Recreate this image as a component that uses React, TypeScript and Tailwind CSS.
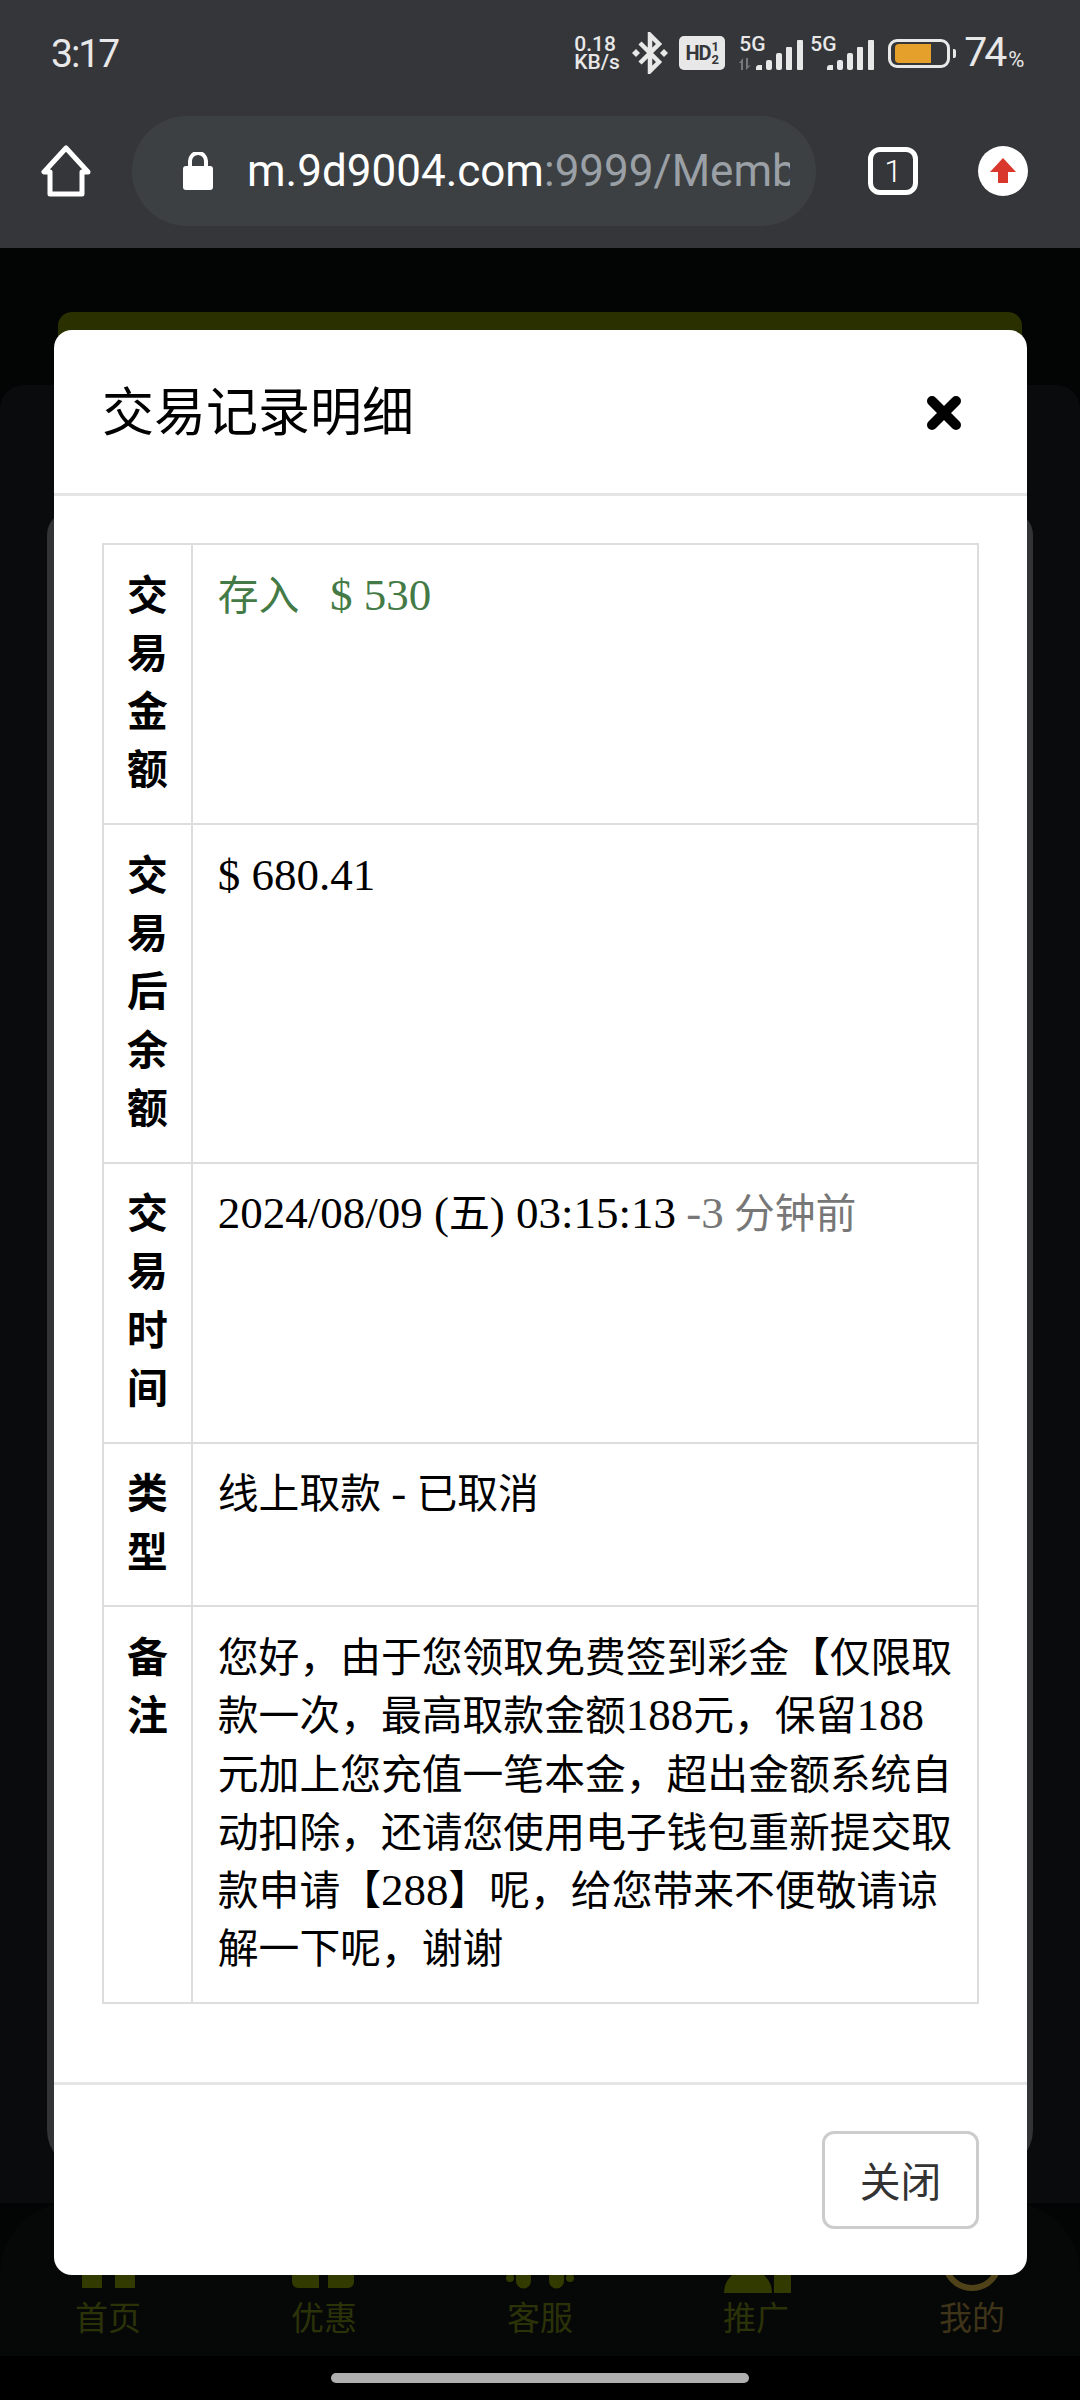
import React from "react";

const Lat = ({ children }: { children: React.ReactNode }) => (
  <span className="text-[45px] leading-none">{children}</span>
);

const Signal = ({ arrows }: { arrows?: boolean }) => (
  <div className="flex items-start h-[34px]">
    <span className="w-[27px] font-['Roboto',sans-serif] text-[21px] font-medium leading-[16px] text-[#e8e8e8]">5G</span>
    <svg width="66" height="32" viewBox="0 0 66 32" className="-ml-[29px] mt-[2px]">
      {arrows && (
        <g fill="#77787a">
          <path d="M2 25l4-5v12H4v-7z" />
          <path d="M9 20h2v8l3-1-5 5z" />
        </g>
      )}
      <path d="M19 30a3 3 0 0 1 3-3h3v5h-6z" fill="#e8e8e8" />
      <rect x="29" y="22" width="6" height="10" rx="2" fill="#e8e8e8" />
      <rect x="39" y="15" width="6" height="17" rx="2" fill="#e8e8e8" />
      <rect x="49" y="9" width="6" height="23" rx="1" fill="#e8e8e8" />
      <rect x="60" y="2" width="6" height="30" rx="1" fill="#e8e8e8" />
    </svg>
  </div>
);

const NavItem = ({ label, color, children }: { label: string; color: string; children: React.ReactNode }) => (
  <div className="flex flex-col items-center justify-end pb-[20px]">
    <svg width="100" height="80" viewBox="0 0 100 80">{children}</svg>
    <span className={`text-[33px] leading-[40px] ${color}`}>{label}</span>
  </div>
);

const Row = ({ head, children }: { head: string; children: React.ReactNode }) => (
  <tr>
    <th className="w-[86px] border-2 border-[#dddddd] px-[23px] py-[22.5px] align-top text-center font-bold text-black">
      {head}
    </th>
    <td className="border-2 border-[#dddddd] py-[22.5px] pl-[25px] pr-[20px] align-top text-black">{children}</td>
  </tr>
);

export default function App() {
  return (
    <div className="relative h-[2400px] w-[1080px] overflow-hidden bg-black font-['Noto_Sans_CJK_SC',sans-serif]">
      {/* browser chrome */}
      <header className="flex h-[248px] flex-col bg-[#35363a] font-['Roboto',sans-serif]">
        <div className="flex h-[106px] items-center pl-[51px]">
          <span className="mt-[2px] text-[39px] tracking-[-2px] text-[#e8e8e8]">3:17</span>
          <div className="ml-[456px] flex w-[50px] flex-col text-[21px] font-medium leading-[18px] text-[#e8e8e8]">
            <span>0.18</span>
            <span>KB/s</span>
          </div>
          <svg width="38" height="42" viewBox="0 0 38 42" className="ml-[7px]">
            <path d="M9 11l19 19-9 9V3l9 9-19 19" fill="none" stroke="#e8e8e8" strokeWidth="4.5" />
            <path d="M1 21l4-4 4 4-4 4zM29 21l4-4 4 4-4 4z" fill="#e8e8e8" />
          </svg>
          <div className="ml-[10px] flex h-[34px] w-[46px] items-center justify-center rounded-[5px] bg-[#e8e8e8] text-[#35363a]">
            <span className="text-[20px] font-bold tracking-[-1px]">HD</span>
            <span className="ml-[1px] flex flex-col text-[13px] font-bold leading-[13px]">
              <span>1</span>
              <span>2</span>
            </span>
          </div>
          <div className="ml-[14px]">
            <Signal arrows />
          </div>
          <div className="ml-[7px]">
            <Signal />
          </div>
          <div className="ml-[14px] flex h-[29px] w-[62px] items-center rounded-[9px] border-[3px] border-[#e8e8e8] pl-[4px]">
            <div className="h-[19px] w-[36px] rounded-l-[4px] bg-[#e5a02c]" />
          </div>
          <div className="ml-[3px] h-[9px] w-[3px] rounded-r-[2px] bg-[#e8e8e8]" />
          <span className="ml-[8px] text-[41px] tracking-[-3px] text-[#e8e8e8]">74</span>
          <span className="ml-[4px] mt-[12px] text-[22px] text-[#e8e8e8]">%</span>
        </div>
        <div className="flex h-[130px] items-center">
          <svg width="52" height="52" viewBox="0 0 52 52" className="ml-[40px]">
            <path d="M26 3L4 27h6v22h32V27h6z" fill="none" stroke="#fff" strokeWidth="5" strokeLinejoin="round" />
          </svg>
          <div className="ml-[40px] flex h-[110px] w-[684px] items-center rounded-[55px] bg-[#3c4043] pl-[51px]">
            <svg width="30" height="38" viewBox="0 0 30 38" className="shrink-0">
              <rect x="0" y="14" width="30" height="24" rx="3" fill="#fff" />
              <path d="M7 16V9a8 8 0 0 1 16 0v7" fill="none" stroke="#fff" strokeWidth="4" />
            </svg>
            <div className="ml-[34px] w-[543px] overflow-hidden whitespace-nowrap text-[44px] leading-[60px] text-white">
              m.9d9004.com<span className="text-[#9aa0a6]">:9999/Member/Transaction</span>
            </div>
          </div>
          <div className="ml-[52px] flex h-[48px] w-[50px] items-center justify-center rounded-[12px] border-[5px] border-white text-[32px] font-light text-white">
            1
          </div>
          <svg width="50" height="50" viewBox="0 0 50 50" className="ml-[60px]">
            <circle cx="25" cy="25" r="25" fill="#fff" />
            <path d="M25 12L38 26h-8v11H20V26h-8z" fill="#d9372c" />
          </svg>
        </div>
      </header>

      {/* dimmed page behind the dialog */}
      <main className="flex h-[2108px] flex-col bg-[#030404]">
        <div className="mx-[58px] mt-[64px] h-[73px] flex-none rounded-t-[14px] bg-[#2a3000]" />
        <div className="flex flex-1 flex-col rounded-t-[24px] bg-[#0a0b0d]">
          <div className="mx-[47px] mt-[126px] h-[1659px] flex-none rounded-t-[24px] rounded-b-[40px] bg-[#333436]" />
        </div>
        <nav className="grid h-[153px] flex-none grid-cols-5 rounded-t-[70px] bg-[#060808]">
          <NavItem label="首页" color="text-[#2c3208]">
            <path d="M24 72V40h20v32zM57 72V40h20v32z" fill="#333a00" />
          </NavItem>
          <NavItem label="优惠" color="text-[#2c3208]">
            <path d="M18 40h27v32H24a6 6 0 0 1-6-6zM54 40h26v26a6 6 0 0 1-6 6H54z" fill="#333a00" />
          </NavItem>
          <NavItem label="客服" color="text-[#2c3208]">
            <path d="M26 40h15v25a7.500 7.500 0 0 1-15 0zM59 40h15v25a7.500 7.500 0 0 1-15 0z" fill="#333a00" />
            <circle cx="20" cy="62" r="4" fill="#333a00" />
            <circle cx="80" cy="62" r="4" fill="#333a00" />
          </NavItem>
          <NavItem label="推广" color="text-[#2c3208]">
            <path d="M18 77a24 24 0 0 1 48 0zM68 40h17v37H68z" fill="#333a00" />
          </NavItem>
          <NavItem label="我的" color="text-[#3f3418]">
            <circle cx="50" cy="45" r="27" fill="none" stroke="#4f4118" strokeWidth="6" />
          </NavItem>
        </nav>
      </main>

      {/* home indicator */}
      <div className="absolute bottom-[17px] left-[331px] h-[10px] w-[418px] rounded-[5px] bg-[#b0b0b0]" />

      {/* dialog */}
      <section className="absolute left-[54px] top-[330px] flex h-[1945px] w-[973px] flex-col rounded-[18px] bg-white">
        <div className="flex h-[166px] flex-none items-center justify-between border-b-[3px] border-[#e5e5e5] pl-[48px] pr-[65px]">
          <h1 className="pb-[6px] text-[52px] font-normal leading-[60px] text-black">交易记录明细</h1>
          <svg width="36" height="36" viewBox="0 0 36 36" className="mt-[2px]">
            <path d="M6 6l24 24M30 6L6 30" stroke="#000" strokeWidth="10" strokeLinecap="round" />
          </svg>
        </div>
        <div className="flex-1 px-[48px] pt-[47px] font-['Liberation_Serif','Noto_Sans_CJK_SC',serif] text-[40.8px] leading-[58.3px]">
          <table className="w-[877px] border-collapse border-2 border-[#dddddd]">
            <tbody>
              <Row head="交易金额">
                <span className="text-[#437a45]">
                  存入&nbsp;&nbsp;&nbsp;<Lat>$ 530</Lat>
                </span>
              </Row>
              <Row head="交易后余额">
                <Lat>$ 680.41</Lat>
              </Row>
              <Row head="交易时间">
                <Lat>2024/08/09 (</Lat>五<Lat>) 03:15:13</Lat>{" "}
                <span className="text-[#777777]">
                  <Lat>-3</Lat> 分钟前
                </span>
              </Row>
              <Row head="类型">
                线上取款 <Lat>-</Lat> 已取消
              </Row>
              <Row head="备注">
                您好，由于您领取免费签到彩金【仅限取款一次，最高取款金额<Lat>188</Lat>元，保留<Lat>188</Lat>元加上您充值一笔本金，超出金额系统自动扣除，还请您使用电子钱包重新提交取款申请【<Lat>288</Lat>】呢，给您带来不便敬请谅解一下呢，谢谢
              </Row>
            </tbody>
          </table>
        </div>
        <div className="flex h-[193px] flex-none justify-end border-t-[3px] border-[#e5e5e5] pr-[48px] pt-[46px]">
          <button className="h-[98px] w-[157px] rounded-[12px] border-[3px] border-[#cccccc] bg-white text-[40.8px] text-[#333333]">
            关闭
          </button>
        </div>
      </section>
    </div>
  );
}
